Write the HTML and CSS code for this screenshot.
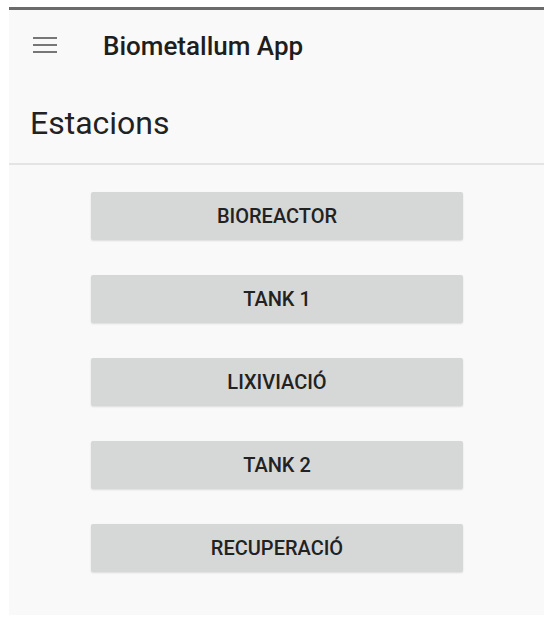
FILE: index.html
```html
<!DOCTYPE html>
<html>
<head>
<meta charset="utf-8" />
<title>Biometallum App</title>
<link rel="stylesheet" href="styles.css">
</head>
<body>
<div class="screen">
  <div class="toolbar">
    <svg class="menu" width="24" height="16" viewBox="0 0 24 16">
      <rect x="0" y="0" width="24" height="2" fill="#777" />
      <rect x="0" y="7" width="24" height="2" fill="#777" />
      <rect x="0" y="14" width="24" height="2" fill="#777" />
    </svg>
    <span class="app-title">Biometallum App</span>
  </div>
  <div class="heading">Estacions</div>
  <ul class="stations">
    <li class="btn">BIOREACTOR</li>
    <li class="btn">TANK 1</li>
    <li class="btn">LIXIVIACIÓ</li>
    <li class="btn">TANK 2</li>
    <li class="btn">RECUPERACIÓ</li>
  </ul>
</div>
</body>
</html>
```

FILE: styles.css
```css
*{ padding:0; margin:0; list-style:none; box-sizing:border-box; }
body{ background:#fff; font-family:Roboto, "Liberation Sans", sans-serif; }
.screen{
  margin:7px 0 0 9px;
  width:535px;
  height:608px;
  background:#f9f9f9;
  border-top:3px solid #6b6b6b;
}
.toolbar{
  height:72px;
  display:flex;
  align-items:center;
  padding-left:24px;
}
.menu{ display:block; margin-top:-2px; }
.app-title{
  margin-left:46px;
  font-size:26px;
  font-weight:500;
  color:#1e1e1e;
}
.heading{
  height:83px;
  display:flex;
  align-items:center;
  padding-left:21px;
  font-size:32px;
  color:#222;
  border-bottom:2px solid #e4e4e4;
}
.stations{
  display:flex;
  flex-direction:column;
  gap:35px;
  padding:27px 0 0 82px;
}
.btn{
  width:372px;
  height:48px;
  display:flex;
  align-items:center;
  justify-content:center;
  background:#d6d7d7;
  border-radius:2px;
  box-shadow:0 1px 2px rgba(0,0,0,0.12);
  font-size:20px;
  font-weight:500;
  color:#222;
}
```
